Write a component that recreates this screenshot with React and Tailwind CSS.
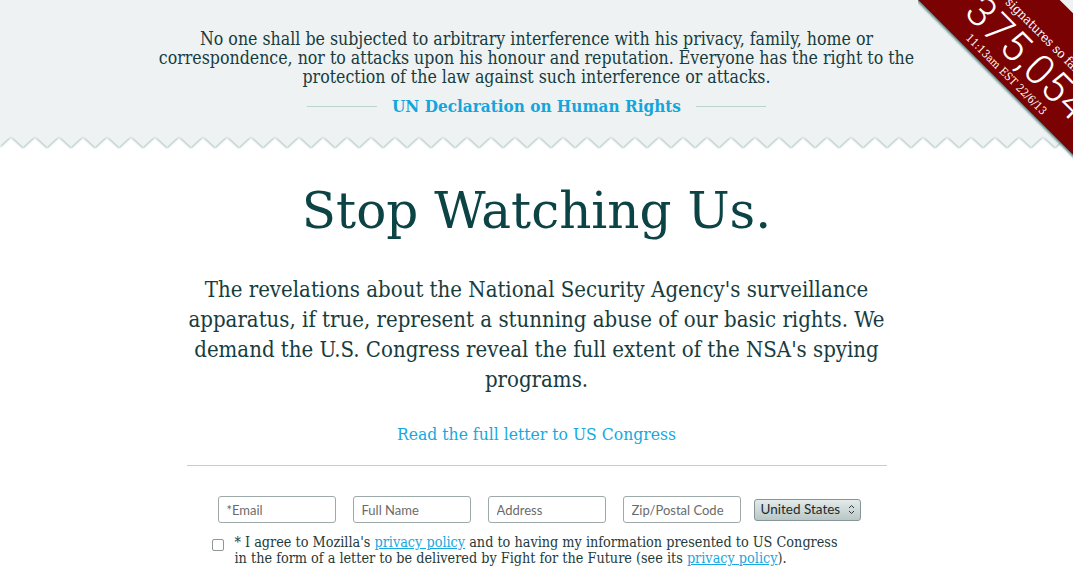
import React from 'react';

const condensed = { fontFamily: '"DejaVu Serif Condensed", "DejaVu Serif", serif' };

const Zigzag = () => (
    <svg width="100%" height="14" className="block" style={{ marginTop: -1 }}>
        <defs>
            <filter id="zzShadow" x="-5%" y="-50%" width="110%" height="200%">
                <feDropShadow dx="0" dy="1" stdDeviation="1.2" floodColor="#7fa6a6" floodOpacity="0.9" />
            </filter>
            <pattern id="zz" x="-1" y="0" width="24" height="14" patternUnits="userSpaceOnUse">
                <polygon points="0,0 24,0 24,11 12,0 0,11" fill="#eef2f3" />
            </pattern>
        </defs>
        <rect x="0" y="0" width="100%" height="14" fill="url(#zz)" filter="url(#zzShadow)" />
    </svg>
);

const Ribbon = () => (
    <div className="absolute top-0 right-0 w-[155px] h-[160px] overflow-hidden pointer-events-none">
        <div className="absolute left-[-37px] top-[-8px] w-[300px] h-[100px] rotate-45 bg-[#7a0202] shadow-[0_2px_2px_rgba(90,140,140,0.9)] text-white">
            <div className="absolute left-[104px] top-[29px] text-[13px] leading-4 whitespace-nowrap" style={condensed}>signatures so far</div>
            <div className="absolute left-[82px] top-[42px] text-[42px] leading-[44px] font-light tracking-[1px] whitespace-nowrap" style={{ fontFamily: 'Roboto, "Open Sans", sans-serif' }}>375,054</div>
            <div className="absolute left-[101px] top-[84px] text-[11px] leading-[14px] whitespace-nowrap" style={condensed}>11:13am EST 22/6/13</div>
        </div>
    </div>
);

const Field = ({ placeholder }) => (
    <input
        type="text"
        placeholder={placeholder}
        className="w-[118px] h-[27px] px-2 rounded-[3px] border border-[#9ea9a9] bg-white text-[13px] text-[#333] placeholder:text-[#6b6b6b] outline-none"
        style={{ fontFamily: 'Lato, "Noto Sans", sans-serif' }}
    />
);

export default function App() {
    return (
        <div className="relative w-[1073px] h-[567px] overflow-hidden bg-white text-[#10393b]">
            {/* quote header */}
            <div className="bg-[#eef2f3] pt-[30px] h-[137px]">
                <p className="w-[790px] mx-auto text-center text-[17.6px] leading-[19px] text-[#173c3e]" style={condensed}>
                    No one shall be subjected to arbitrary interference with his privacy, family, home or correspondence, nor to attacks upon his honour and reputation. Everyone has the right to the protection of the law against such interference or attacks.
                </p>
                <div className="flex items-center justify-center gap-[15px] mt-[9px]">
                    <span className="w-[70px] h-px bg-[#bcd2ce]" />
                    <span className="text-[17px] leading-5 font-bold text-[#14a5dc]" style={condensed}>UN Declaration on Human Rights</span>
                    <span className="w-[70px] h-px bg-[#bcd2ce]" />
                </div>
            </div>
            <Zigzag />
            <Ribbon />

            <h1 className="mt-[31px] text-center text-[50px] leading-[60px] text-[#0c4345]" style={{ fontFamily: '"DejaVu Serif", serif' }}>
                Stop Watching Us.
            </h1>

            <p className="mt-[34px] w-[706px] mx-auto text-center text-[22px] leading-[30px] text-[#173c3e]" style={condensed}>
                The revelations about the National Security Agency's surveillance apparatus, if true, represent a stunning abuse of our basic rights. We demand the U.S. Congress reveal the full extent of the NSA's spying programs.
            </p>

            <div className="mt-[27px] text-center">
                <a href="#" className="text-[17.4px] leading-6 text-[#16a8e0]" style={condensed}>Read the full letter to US Congress</a>
            </div>

            <div className="w-[700px] mx-auto mt-[19px] border-t border-[#bcd2d2]">
                <form className="flex items-center gap-[17px] pl-[31px] mt-[30px]">
                    <Field placeholder="*Email" />
                    <Field placeholder="Full Name" />
                    <Field placeholder="Address" />
                    <Field placeholder="Zip/Postal Code" />
                    <div
                        className="w-[107px] h-[22px] -ml-[4px] flex items-center justify-between pl-[6px] pr-[5px] rounded-[3px] border border-[#869696] bg-gradient-to-b from-[#e3eaea] to-[#b9c7c6] text-[13.5px] text-[#1e2a2a]"
                        style={{ fontFamily: 'Lato, "Noto Sans", sans-serif' }}
                    >
                        <span>United States</span>
                        <svg width="7" height="11" viewBox="0 0 7 11">
                            <path d="M1 4 L3.5 1.5 L6 4" fill="none" stroke="#333" strokeWidth="1" />
                            <path d="M1 7 L3.5 9.5 L6 7" fill="none" stroke="#333" strokeWidth="1" />
                        </svg>
                    </div>
                </form>

                <div className="flex items-start gap-[11px] pl-[25px] mt-[11px]">
                    <span className="mt-[5px] w-[12px] h-[12px] shrink-0 rounded-[2px] border border-[#8d9797] bg-white" />
                    <p className="w-[612px] text-[14.3px] leading-4 text-[#1e3a3a]" style={condensed}>
                        * I agree to Mozilla's <a href="#" className="text-[#16a8e0] underline">privacy policy</a> and to having my information presented to US Congress in the form of a letter to be delivered by Fight for the Future (see its <a href="#" className="text-[#16a8e0] underline">privacy policy</a>).
                    </p>
                </div>
            </div>
        </div>
    );
}
